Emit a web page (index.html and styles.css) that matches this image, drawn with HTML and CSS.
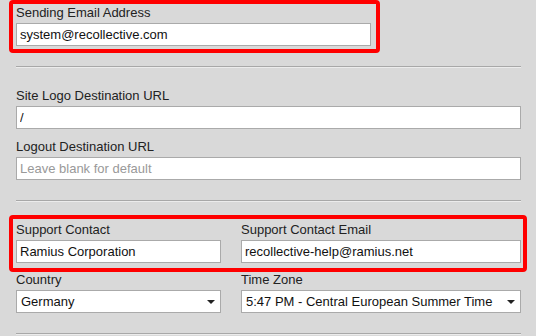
FILE: index.html
```html
<!DOCTYPE html>
<html lang="en">
<head>
    <meta charset="UTF-8">
    <meta name="viewport" content="width=device-width, initial-scale=1.0">
    <title>Site Settings</title>
    <link rel="stylesheet" href="styles.css">
</head>
<body>
    <div class="settings">
        <div class="highlight sender">
            <div class="field">
                <label for="sender">Sending Email Address</label>
                <input id="sender" type="text" value="system@recollective.com">
            </div>
        </div>

        <div class="divider first"></div>

        <div class="field">
            <label for="logo-url">Site Logo Destination URL</label>
            <input id="logo-url" type="text" value="/">
        </div>
        <div class="field">
            <label for="logout-url">Logout Destination URL</label>
            <input id="logout-url" type="text" placeholder="Leave blank for default">
        </div>

        <div class="divider"></div>

        <div class="highlight support">
            <div class="row">
                <div class="field">
                    <label for="contact">Support Contact</label>
                    <input id="contact" type="text" value="Ramius Corporation">
                </div>
                <div class="field">
                    <label for="contact-email">Support Contact Email</label>
                    <input id="contact-email" type="text" value="recollective-help@ramius.net">
                </div>
            </div>
        </div>

        <div class="row locale">
            <div class="field">
                <label for="country">Country</label>
                <div class="select">
                    <select id="country">
                        <option>Germany</option>
                    </select>
                </div>
            </div>
            <div class="field">
                <label for="timezone">Time Zone</label>
                <div class="select">
                    <select id="timezone">
                        <option>5:47 PM - Central European Summer Time</option>
                    </select>
                </div>
            </div>
        </div>

        <div class="divider"></div>
    </div>
</body>
</html>
```

FILE: styles.css
```css
* {
    box-sizing: border-box;
}

body {
    margin: 0;
    background-color: #d9d9d9;
    font-family: "Liberation Sans", Arial, sans-serif;
    font-size: 13px;
    color: #222;
}

.settings {
    width: 505px;
    margin-left: 16px;
}

/* red annotation boxes around the fields */
.highlight {
    border: 4px solid #ff0000;
    border-radius: 4px;
    margin-left: -7px;
    padding: 2px 2px 3px 3px;
}

.sender {
    width: 371px;
    padding-top: 1px;
    padding-right: 5px;
}

.support {
    margin-right: -6px;
    padding-top: 3px;
    padding-bottom: 5px;
}

.field {
    display: flex;
    flex-direction: column;
}

.field + .field {
    margin-top: 10px;
}

.field label {
    line-height: 16px;
    margin-bottom: 2px;
}

.field input,
.field select {
    height: 23px;
    width: 100%;
    border: 1px solid #aaa;
    border-radius: 0;
    background-color: #fff;
    padding: 0 4px 0 3px;
    font-family: inherit;
    font-size: 13px;
    color: #111;
    outline: none;
}

.field input::placeholder {
    color: #999;
}

.row {
    display: grid;
    grid-template-columns: 205px 280px;
    column-gap: 20px;
}

.row .field + .field {
    margin-top: 0;
}

.select {
    position: relative;
}

.select select {
    appearance: none;
    -webkit-appearance: none;
    padding-left: 4px;
}

.select::after {
    content: "";
    position: absolute;
    right: 6px;
    top: 10px;
    border-left: 4px solid transparent;
    border-right: 4px solid transparent;
    border-top: 4px solid #222;
    pointer-events: none;
}

.divider {
    border-top: 1px solid #a8a8a8;
    border-bottom: 1px solid #ececec;
    margin: 20px 0 13px;
}

.divider.first {
    margin: 13px 0 20px;
}
```
